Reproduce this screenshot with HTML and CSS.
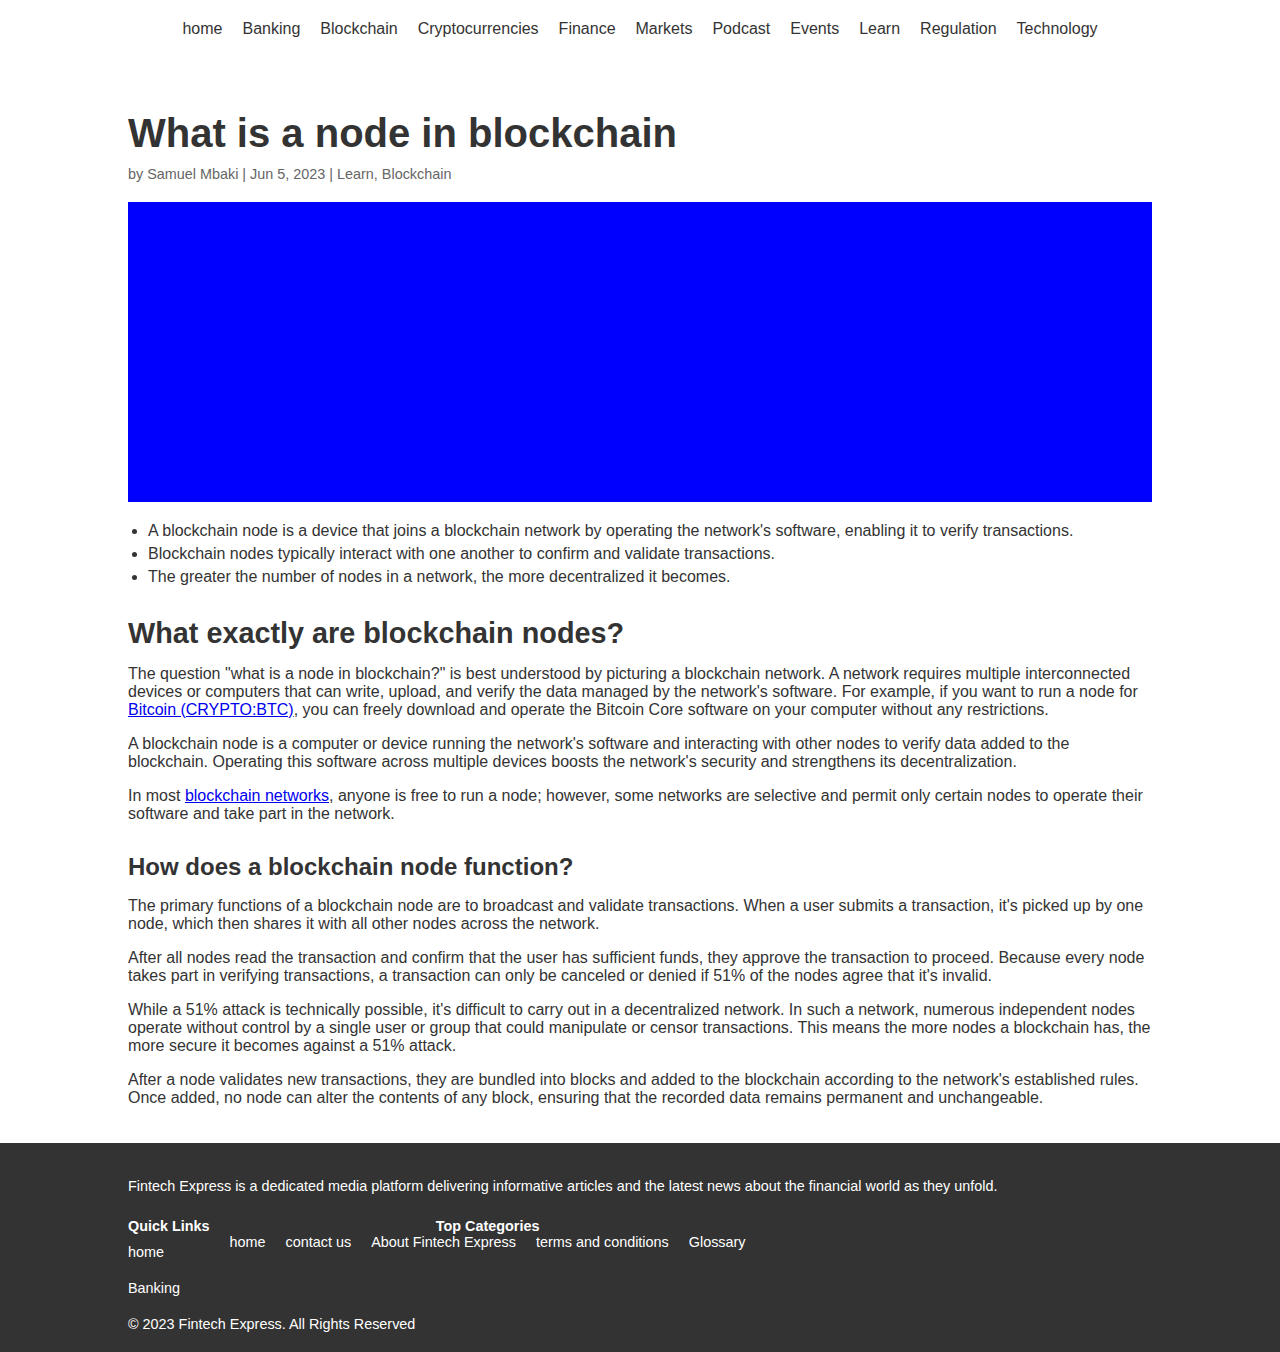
FILE: index.html
```html
<!DOCTYPE html>
<html lang="en">
<head>
<meta charset="utf-8">
<title>What is a node in blockchain</title>
<link rel="stylesheet" href="styles.css">
</head>
<body>
<header class="site-header">
  <nav class="main-nav">
    <a href="#">home</a>
    <a href="#">Banking</a>
    <a href="#">Blockchain</a>
    <a href="#">Cryptocurrencies</a>
    <a href="#">Finance</a>
    <a href="#">Markets</a>
    <a href="#">Podcast</a>
    <a href="#">Events</a>
    <a href="#">Learn</a>
    <a href="#">Regulation</a>
    <a href="#">Technology</a>
  </nav>
</header>

<main class="article">
  <h1 class="title">What is a node in blockchain</h1>
  <p class="meta">by Samuel Mbaki | Jun 5, 2023 | Learn, Blockchain</p>
  <div class="hero"></div>

  <ul class="key-points">
    <li>A blockchain node is a device that joins a blockchain network by operating the network's software, enabling it to verify transactions.</li>
    <li>Blockchain nodes typically interact with one another to confirm and validate transactions.</li>
    <li>The greater the number of nodes in a network, the more decentralized it becomes.</li>
  </ul>

  <h2 class="section-title">What exactly are blockchain nodes?</h2>
  <p>The question "what is a node in blockchain?" is best understood by picturing a blockchain network. A network requires multiple interconnected devices or computers that can write, upload, and verify the data managed by the network's software. For example, if you want to run a node for <a href="#">Bitcoin (CRYPTO:BTC)</a>, you can freely download and operate the Bitcoin Core software on your computer without any restrictions.</p>
  <p>A blockchain node is a computer or device running the network's software and interacting with other nodes to verify data added to the blockchain. Operating this software across multiple devices boosts the network's security and strengthens its decentralization.</p>
  <p>In most <a href="#">blockchain networks</a>, anyone is free to run a node; however, some networks are selective and permit only certain nodes to operate their software and take part in the network.</p>

  <h3 class="sub-title">How does a blockchain node function?</h3>
  <p>The primary functions of a blockchain node are to broadcast and validate transactions. When a user submits a transaction, it's picked up by one node, which then shares it with all other nodes across the network.</p>
  <p>After all nodes read the transaction and confirm that the user has sufficient funds, they approve the transaction to proceed. Because every node takes part in verifying transactions, a transaction can only be canceled or denied if 51% of the nodes agree that it's invalid.</p>
  <p>While a 51% attack is technically possible, it's difficult to carry out in a decentralized network. In such a network, numerous independent nodes operate without control by a single user or group that could manipulate or censor transactions. This means the more nodes a blockchain has, the more secure it becomes against a 51% attack.</p>
  <p>After a node validates new transactions, they are bundled into blocks and added to the blockchain according to the network's established rules. Once added, no node can alter the contents of any block, ensuring that the recorded data remains permanent and unchangeable.</p>
</main>

<footer class="site-footer">
  <div class="footer-inner">
    <p class="about">Fintech Express is a dedicated media platform delivering informative articles and the latest news about the financial world as they unfold.</p>
    <div class="footer-cols">
      <div class="col quick">
        <h4 class="col-title">Quick Links</h4>
        <ul class="quick-list">
          <li><a href="#">home</a></li>
          <li><a href="#">Banking</a></li>
        </ul>
      </div>
      <div class="col cats">
        <h4 class="col-title center">Top Categories</h4>
        <div class="cat-links">
          <a href="#">home</a>
          <a href="#">contact us</a>
          <a href="#">About Fintech Express</a>
          <a href="#">terms and conditions</a>
          <a href="#">Glossary</a>
        </div>
      </div>
    </div>
    <p class="copyright">© 2023 Fintech Express. All Rights Reserved</p>
  </div>
</footer>
</body>
</html>
```

FILE: styles.css
```css
* { box-sizing: border-box; }

body {
  margin: 0;
  font-family: "Liberation Sans", Arial, sans-serif;
  color: #333;
  background: #fff;
}

.site-header {
  padding: 20px 0 19px;
}

.main-nav {
  display: flex;
  justify-content: center;
  gap: 20px;
  font-size: 16px;
  line-height: 18px;
}

.main-nav a {
  color: #333;
  text-decoration: none;
}

.article {
  width: 1024px;
  margin: 0 auto;
  padding: 48px 0 20px;
  font-size: 16px;
  line-height: 18px;
}

.title {
  margin: 0;
  font-size: 40px;
  line-height: 56px;
  font-weight: bold;
}

.meta {
  margin: 5px 0 0;
  font-size: 14.4px;
  line-height: 16px;
  color: #666;
}

.hero {
  margin-top: 20px;
  height: 300px;
  background: #0000ff;
}

.key-points {
  margin: 17px 0 0;
  padding-left: 20px;
  line-height: 23px;
}

.section-title {
  margin: 28px 0 15px;
  font-size: 28.8px;
  line-height: 34px;
  font-weight: bold;
}

.sub-title {
  margin: 30px 0 16px;
  font-size: 24px;
  line-height: 28px;
  font-weight: bold;
}

.article p {
  margin: 0 0 16px;
}

.article .meta {
  margin: 5px 0 0;
}

.article a {
  color: #0000ee;
  text-decoration: underline;
}

.site-footer {
  background: #333;
  color: #fff;
  font-size: 14.4px;
  line-height: 16px;
}

.footer-inner {
  width: 1024px;
  margin: 0 auto;
  padding: 35px 0 20px;
}

.about {
  margin: 0 0 24px;
}

.footer-cols {
  display: flex;
  gap: 20px;
  align-items: flex-start;
}

.col-title {
  margin: 0;
  font-size: 14.4px;
  line-height: 16px;
  font-weight: bold;
}

.col-title.center {
  text-align: center;
}

.quick-list {
  list-style: none;
  margin: 0;
  padding: 0;
}

.quick-list li {
  padding: 10px 0;
}

.site-footer a {
  color: #fff;
  text-decoration: none;
}

.cat-links {
  display: flex;
  gap: 20px;
}

.copyright {
  margin: 10px 0 0;
}
```
